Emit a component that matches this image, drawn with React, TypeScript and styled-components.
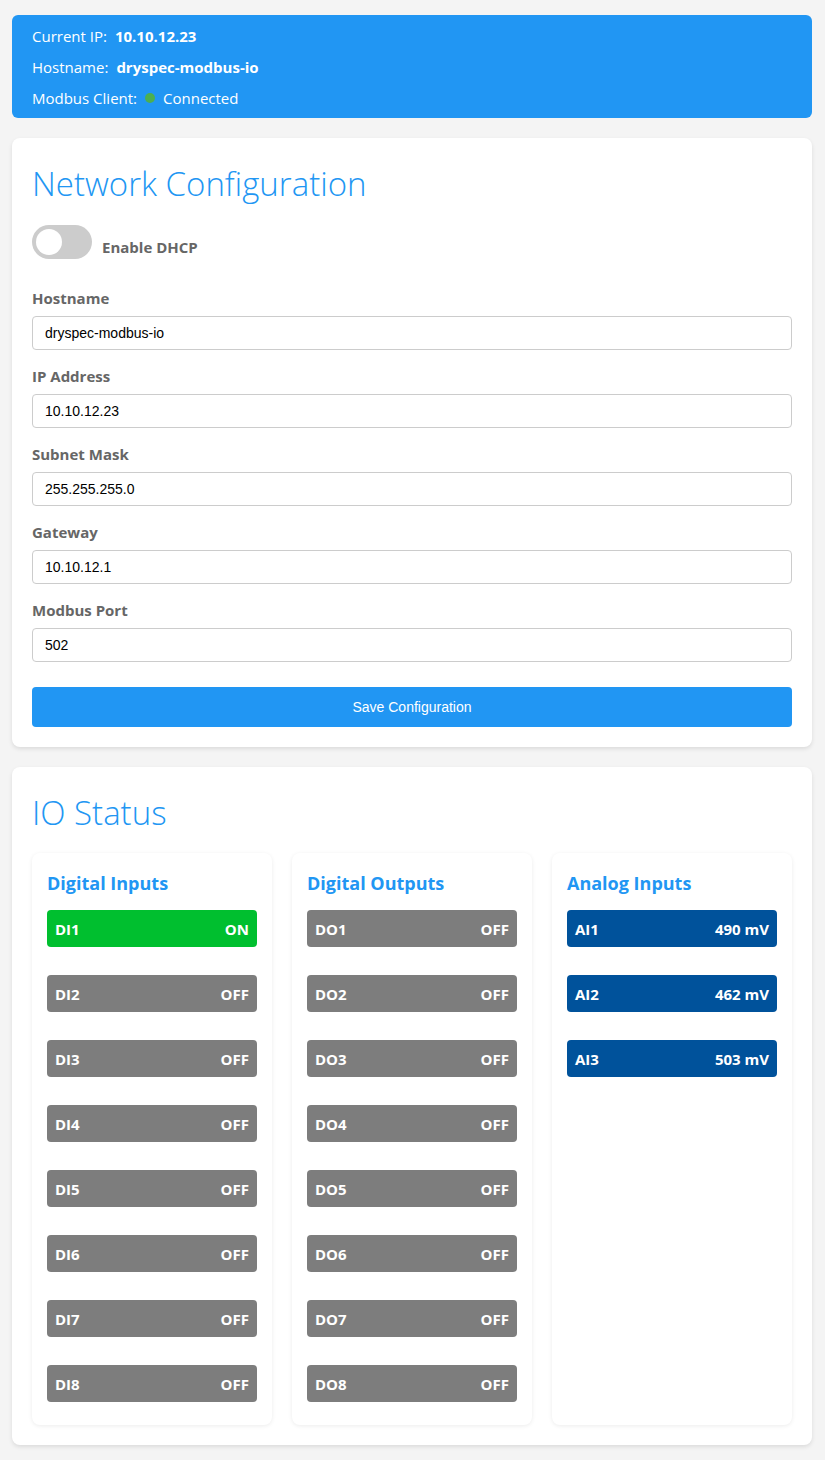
import React from "react";
import styled, { createGlobalStyle } from "styled-components";

const Global = createGlobalStyle`
  html, body { margin: 0; padding: 0; background: #f4f4f4; }
  body { font-family: "Open Sans", "Noto Sans", sans-serif; color: #333; }
  * { box-sizing: border-box; }
`;

const Page = styled.div`
  padding: 15px 13px 15px 12px;
  display: flex;
  flex-direction: column;
  gap: 20px;
`;

const StatusBar = styled.div`
  background: #2196f3;
  color: #fff;
  border-radius: 6px;
  padding: 10px 20px 9px;
  display: flex;
  flex-direction: column;
  gap: 9px;
  font-size: 15px;
`;

const StatusLine = styled.div`
  display: flex;
  align-items: center;
  height: 22px;
  gap: 8px;
`;

const StatusValue = styled.span`
  font-weight: 700;
`;

const Dot = styled.span`
  width: 10px;
  height: 10px;
  border-radius: 50%;
  background: #4caf50;
  display: inline-block;
`;

const Card = styled.section`
  background: #fff;
  border-radius: 8px;
  box-shadow: 0 2px 4px rgba(0, 0, 0, 0.1);
  padding: 20px;
`;

const Title = styled.h2`
  margin: 0;
  font-size: 33px;
  font-weight: 300;
  color: #2196f3;
  line-height: 52px;
`;

const ToggleRow = styled.label`
  display: flex;
  align-items: center;
  gap: 10px;
  margin-top: 15px;
  margin-bottom: 28px;
  font-weight: 700;
  font-size: 15px;
  color: #666;
`;

const ToggleText = styled.span`
  padding-top: 9px;
`;

const Switch = styled.span`
  width: 60px;
  height: 34px;
  border-radius: 17px;
  background: #ccc;
  position: relative;
  display: inline-block;
  &::after {
    content: "";
    position: absolute;
    left: 4px;
    top: 4px;
    width: 26px;
    height: 26px;
    border-radius: 50%;
    background: #fff;
  }
`;

const Field = styled.div`
  display: flex;
  flex-direction: column;
  margin-top: 15px;
`;

const FieldLabel = styled.label`
  font-weight: 700;
  font-size: 15px;
  color: #666;
  line-height: 22px;
  margin-bottom: 7px;
`;

const Input = styled.input`
  height: 34px;
  border: 1px solid #ccc;
  border-radius: 4px;
  padding: 0 12px;
  font-family: "Liberation Sans", Arial, sans-serif;
  font-size: 14px;
  color: #000;
`;

const SaveButton = styled.button`
  margin-top: 25px;
  width: 100%;
  height: 40px;
  border: none;
  border-radius: 4px;
  background: #2196f3;
  color: #fff;
  font-family: "Liberation Sans", Arial, sans-serif;
  font-size: 14px;
`;

const IOGrid = styled.div`
  display: grid;
  grid-template-columns: repeat(3, 1fr);
  gap: 20px;
  margin-top: 14px;
  align-items: stretch;
`;

const IOCard = styled.div`
  background: #fff;
  border-radius: 8px;
  box-shadow: 0 1px 4px rgba(0, 0, 0, 0.08);
  padding: 15px 15px 23px;
  display: flex;
  flex-direction: column;
  gap: 28px;
`;

const IOCardTitle = styled.h3`
  margin: 0 0 -16px;
  font-size: 18px;
  font-weight: 700;
  color: #2196f3;
  line-height: 30px;
`;

const Item = styled.div<{ $kind: "on" | "off" | "analog" }>`
  height: 37px;
  border-radius: 4px;
  padding: 0 8px;
  display: flex;
  align-items: center;
  justify-content: space-between;
  color: #fff;
  font-weight: 700;
  font-size: 15px;
  background: ${(p) =>
    p.$kind === "on" ? "#00bf2f" : p.$kind === "analog" ? "#00529b" : "#7d7d7d"};
`;

const fields = [
  ["Hostname", "dryspec-modbus-io"],
  ["IP Address", "10.10.12.23"],
  ["Subnet Mask", "255.255.255.0"],
  ["Gateway", "10.10.12.1"],
  ["Modbus Port", "502"],
];

const di = [true, false, false, false, false, false, false, false];
const dout = [false, false, false, false, false, false, false, false];
const ai = [490, 462, 503];

export default function App() {
  return (
    <>
      <Global />
      <Page>
        <StatusBar>
          <StatusLine>
            Current IP: <StatusValue>10.10.12.23</StatusValue>
          </StatusLine>
          <StatusLine>
            Hostname: <StatusValue>dryspec-modbus-io</StatusValue>
          </StatusLine>
          <StatusLine>
            Modbus Client: <Dot /> Connected
          </StatusLine>
        </StatusBar>

        <Card>
          <Title>Network Configuration</Title>
          <ToggleRow>
            <Switch />
            <ToggleText>Enable DHCP</ToggleText>
          </ToggleRow>
          {fields.map(([l, v]) => (
            <Field key={l}>
              <FieldLabel>{l}</FieldLabel>
              <Input defaultValue={v} />
            </Field>
          ))}
          <SaveButton>Save Configuration</SaveButton>
        </Card>

        <Card>
          <Title>IO Status</Title>
          <IOGrid>
            <IOCard>
              <IOCardTitle>Digital Inputs</IOCardTitle>
              {di.map((on, i) => (
                <Item key={i} $kind={on ? "on" : "off"}>
                  <span>DI{i + 1}</span>
                  <span>{on ? "ON" : "OFF"}</span>
                </Item>
              ))}
            </IOCard>
            <IOCard>
              <IOCardTitle>Digital Outputs</IOCardTitle>
              {dout.map((on, i) => (
                <Item key={i} $kind={on ? "on" : "off"}>
                  <span>DO{i + 1}</span>
                  <span>{on ? "ON" : "OFF"}</span>
                </Item>
              ))}
            </IOCard>
            <IOCard>
              <IOCardTitle>Analog Inputs</IOCardTitle>
              {ai.map((v, i) => (
                <Item key={i} $kind="analog">
                  <span>AI{i + 1}</span>
                  <span>{v} mV</span>
                </Item>
              ))}
            </IOCard>
          </IOGrid>
        </Card>
      </Page>
    </>
  );
}
